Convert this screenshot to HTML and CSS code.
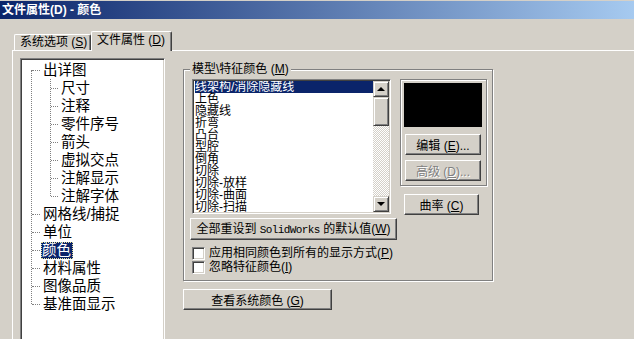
FILE: index.html
```html
<!DOCTYPE html>
<html lang="zh-CN">
<head>
  <meta charset="UTF-8">
  <meta name="viewport" content="width=device-width, initial-scale=1.0">
  <title>文件属性(D) - 颜色</title>
  <link rel="stylesheet" href="styles.css">
</head>
<body>
  <div class="titlebar">文件属性(D) - 颜色</div>

  <div class="tabs">
    <div class="tab">系统选项 (<u>S</u>)</div>
    <div class="tab active">文件属性 (<u>D</u>)</div>
  </div>

  <div class="panel">
    <div class="tree-box">
      <ul class="tree">
        <li>出详图
          <ul class="sub">
            <li>尺寸</li>
            <li>注释</li>
            <li>零件序号</li>
            <li>箭头</li>
            <li>虚拟交点</li>
            <li>注解显示</li>
            <li>注解字体</li>
          </ul>
        </li>
        <li>网格线/捕捉</li>
        <li>单位</li>
        <li><span class="sel">颜色</span></li>
        <li>材料属性</li>
        <li>图像品质</li>
        <li>基准面显示</li>
      </ul>
    </div>

    <div class="content">
      <div class="group">
        <div class="group-label">模型\特征颜色 (<u>M</u>)</div>
        <div class="group-body">
          <div class="group-left">
            <div class="listbox">
              <ul class="list-items">
                <li class="sel">线架构/消除隐藏线</li>
                <li>上色</li>
                <li>隐藏线</li>
                <li>折弯</li>
                <li>凸台</li>
                <li>型腔</li>
                <li>倒角</li>
                <li>切除</li>
                <li>切除-放样</li>
                <li>切除-曲面</li>
                <li>切除-扫描</li>
                <li>切除-拉伸</li>
              </ul>
              <div class="scrollbar">
                <div class="sb-btn"><span class="arrow-up"></span></div>
                <div class="sb-thumb"></div>
                <div class="sb-track"></div>
                <div class="sb-btn"><span class="arrow-down"></span></div>
              </div>
            </div>
            <button class="btn btn-reset">全部重设到 <span class="mono">SolidWorks</span> 的默认值(<u>W</u>)</button>
            <label class="check first"><span class="box"></span><span>应用相同颜色到所有的显示方式(<u>P</u>)</span></label>
            <label class="check"><span class="box"></span><span>忽略特征颜色(<u>I</u>)</span></label>
          </div>

          <div class="group-right">
            <div class="swatch-frame">
              <div class="swatch"></div>
              <button class="btn btn-edit">编辑 (<u>E</u>)...</button>
              <button class="btn btn-adv" disabled>高级 (<u>D</u>)...</button>
            </div>
            <button class="btn btn-curve">曲率 (<u>C</u>)</button>
          </div>
        </div>
      </div>

      <button class="btn btn-system">查看系统颜色 (<u>G</u>)</button>
    </div>
  </div>
</body>
</html>
```

FILE: styles.css
```css
/* Reset */
* {
  margin: 0;
  padding: 0;
  box-sizing: border-box;
}

body {
  font-family: "Liberation Sans", "Noto Sans CJK SC", sans-serif;
  font-size: 12px;
  color: #000;
  background: #d4d0c8;
  height: 339px;
  overflow: hidden;
}

/* Title bar */
.titlebar {
  margin-top: 1px;
  height: 18px;
  line-height: 18px;
  padding-left: 2px;
  font-weight: bold;
  color: #fff;
  background: linear-gradient(to right, #0a246a, #a6caf0);
}

/* Tabs */
.tabs {
  display: flex;
  align-items: flex-end;
  height: 31px;
  padding-left: 14px;
}

.tab {
  width: 77px;
  height: 16px;
  line-height: 14px;
  padding-left: 5px;
  white-space: nowrap;
  border-top: 1px solid #fff;
  border-left: 1px solid #fff;
  border-right: 1px solid #404040;
  border-radius: 2px 2px 0 0;
  box-shadow: inset -1px 0 #808080;
}

.tab.active {
  width: 81px;
  height: 20px;
  line-height: 17px;
  padding-left: 5px;
  margin-bottom: -1px;
  background: #d4d0c8;
  position: relative;
  z-index: 1;
}

/* Tab page */
.panel {
  display: flex;
  gap: 18px;
  margin-left: 12px;
  padding: 7px 0 0 7px;
  border-top: 1px solid #fff;
  border-left: 1px solid #fff;
}

/* Tree */
.tree-box {
  width: 145px;
  height: 290px;
  flex: none;
  background: #fff;
  border: 1px solid;
  border-color: #808080 #fff #fff #808080;
  box-shadow: inset 1px 1px #404040, inset -1px -1px #d4d0c8;
  padding: 1px;
  overflow: hidden;
}

.tree {
  list-style: none;
  position: relative;
  padding: 1px 0 0 21px;
  font-size: 14.5px;
  line-height: 18px;
  white-space: nowrap;
}

.tree::before {
  content: "";
  position: absolute;
  left: 9px;
  top: 10px;
  bottom: 9px;
  border-left: 1px dotted #808080;
}

.tree li {
  position: relative;
}

.tree li::before {
  content: "";
  position: absolute;
  left: -11px;
  top: 9px;
  width: 8px;
  border-top: 1px dotted #808080;
}

.sub {
  list-style: none;
  position: relative;
  padding-left: 18px;
}

.sub::before {
  content: "";
  position: absolute;
  left: 7px;
  top: 0;
  bottom: 9px;
  border-left: 1px dotted #808080;
}

.sub li::before {
  left: -10px;
  width: 7px;
}

.tree .sel {
  display: inline-block;
  height: 17px;
  line-height: 17px;
  margin-left: -2px;
  padding: 0 2px 0 1px;
  background: #0a246a;
  color: #fff;
  outline: 1px dotted #e8e4a0;
  outline-offset: -1px;
}

/* Right side */
.content {
  padding-top: 11px;
}

.group {
  width: 310px;
  border: 1px solid #808080;
  box-shadow: inset 1px 1px #fff, 1px 1px #fff;
  padding: 9px 5px 6px 6px;
}

.group-label {
  display: table;
  margin: -17px 0 3px;
  padding: 0 2px;
  line-height: 14px;
  background: #d4d0c8;
}

.group-body {
  display: flex;
  align-items: flex-start;
  gap: 3px;
}

.group-left {
  width: 207px;
}

/* List box */
.listbox {
  display: flex;
  width: 199px;
  height: 135px;
  margin-left: 2px;
  background: #fff;
  border: 1px solid;
  border-color: #808080 #fff #fff #808080;
  box-shadow: inset 1px 1px #404040, inset -1px -1px #d4d0c8;
  padding: 1px;
}

.list-items {
  flex: 1;
  list-style: none;
  padding-left: 1px;
  overflow: hidden;
  line-height: 12px;
  white-space: nowrap;
}

.list-items li {
  height: 12px;
}

.list-items li.sel {
  background: #0a246a;
  color: #fff;
}

.scrollbar {
  width: 16px;
  display: flex;
  flex-direction: column;
}

.sb-btn,
.sb-thumb {
  background: #d4d0c8;
  border: 1px solid;
  border-color: #d4d0c8 #404040 #404040 #d4d0c8;
  box-shadow: inset 1px 1px #fff, inset -1px -1px #808080;
}

.sb-btn {
  height: 16px;
  display: flex;
  align-items: center;
  justify-content: center;
}

.sb-thumb {
  height: 29px;
}

.sb-track {
  flex: 1;
  background-color: #d4d0c8;
  background-image: conic-gradient(#fff 25%, #d4d0c8 0 50%, #fff 0 75%, #d4d0c8 0);
  background-size: 2px 2px;
}

.arrow-up,
.arrow-down {
  width: 0;
  height: 0;
  border-left: 4px solid transparent;
  border-right: 4px solid transparent;
}

.arrow-up {
  border-bottom: 4px solid #000;
}

.arrow-down {
  border-top: 4px solid #000;
}

/* Buttons */
.btn {
  display: block;
  height: 21px;
  line-height: 19px;
  font: inherit;
  color: #000;
  text-align: center;
  white-space: nowrap;
  background: #d4d0c8;
  border: 1px solid;
  border-color: #fff #404040 #404040 #fff;
  box-shadow: inset -1px -1px #808080;
}

.btn[disabled] {
  color: #808080;
  text-shadow: 1px 1px #fff;
}

.btn-reset {
  width: 207px;
  height: 22px;
  line-height: 20px;
  margin-top: 4px;
}

.mono {
  font-family: "Liberation Mono", monospace;
  font-size: 11px;
  letter-spacing: -0.6px;
}

/* Check boxes */
.check {
  display: flex;
  align-items: center;
  gap: 4px;
  height: 14px;
  margin-left: 2px;
  white-space: nowrap;
  line-height: 14px;
}

.check.first {
  margin-top: 6px;
}

.box {
  width: 13px;
  height: 13px;
  flex: none;
  background: #fff;
  border: 1px solid;
  border-color: #808080 #fff #fff #808080;
  box-shadow: inset 1px 1px #404040, inset -1px -1px #d4d0c8;
}

/* Colour swatch */
.group-right {
  width: 87px;
}

.swatch-frame {
  border: 1px solid #808080;
  box-shadow: inset 1px 1px #fff, 1px 1px #fff;
  padding: 3px 4px 4px 3px;
}

.swatch {
  height: 44px;
  background: #000;
}

.btn-edit,
.btn-adv {
  width: 76px;
  margin-left: 1px;
}

.btn-edit {
  margin-top: 7px;
}

.btn-adv {
  margin-top: 5px;
}

.btn-curve {
  width: 75px;
  margin: 8px 0 0 4px;
}

.btn-system {
  width: 149px;
  margin-top: 8px;
}
```
